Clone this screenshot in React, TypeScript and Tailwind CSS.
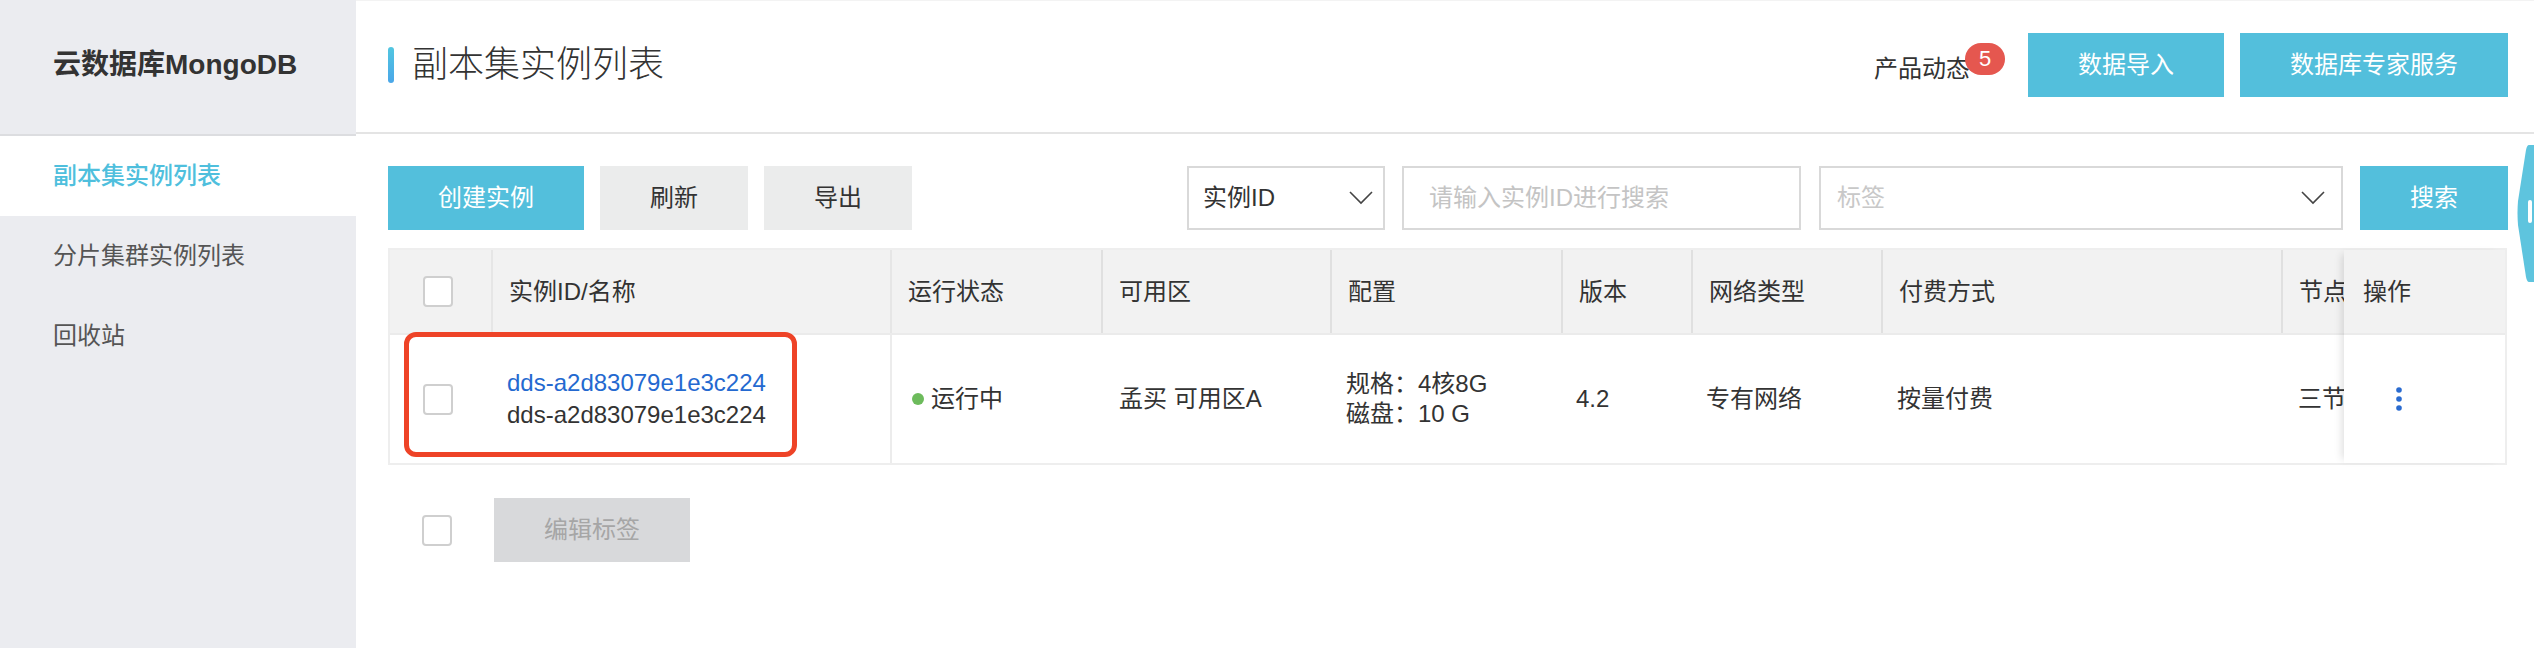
import React from "react";

function Checkbox() {
  return <div className="w-[30px] h-[31px] rounded-[4px] border-2 border-[#cfcfcf] bg-white shrink-0" />;
}

function Chevron() {
  return (
    <svg width="24" height="14" viewBox="0 0 24 14" className="shrink-0">
      <polyline points="1,1 12,12 23,1" fill="none" stroke="#444" strokeWidth="1.6" />
    </svg>
  );
}

export default function App() {
  const font = "font-['Liberation_Sans','Noto_Sans_CJK_SC',sans-serif]";
  return (
    <div className={`flex h-[648px] w-[2534px] overflow-hidden bg-white text-[#333] ${font}`}>
      {/* Sidebar */}
      <aside className="w-[356px] shrink-0 bg-[#ebecf0] flex flex-col">
        <div className="h-[136px] border-b-2 border-[#dcdde0] flex items-center pl-[53px] pb-[4px] text-[28px] font-bold text-[#333]">
          云数据库MongoDB
        </div>
        <div className="h-[80px] bg-white flex items-center pl-[53px] text-[24px] font-medium text-[#4fbfdd]">
          副本集实例列表
        </div>
        <div className="h-[80px] flex items-center pl-[53px] text-[24px] text-[#555]">分片集群实例列表</div>
        <div className="h-[80px] flex items-center pl-[53px] text-[24px] text-[#555]">回收站</div>
      </aside>

      {/* Main */}
      <main className="relative flex-1 flex flex-col min-w-0">
        {/* Header */}
        <header className="h-[134px] shrink-0 border-t border-[#f3f3f3] border-b-2 border-b-[#e4e4e4] flex items-center pl-[32px] pr-[26px] pb-[4px]">
          <div className="w-[6px] h-[36px] rounded-[3px] bg-gradient-to-b from-[#52c6e0] to-[#4aa6e8]" />
          <div className="ml-[18px] text-[36px] font-light text-[#333] leading-none">副本集实例列表</div>
          <div className="flex-1" />
          <div className="relative pt-[8px] text-[24px] text-[#333] mr-[58px]">
            产品动态
            <span className="absolute left-[91px] top-[0px] w-[40px] h-[32px] rounded-full bg-[#e5574f] text-white text-[22px] flex items-center justify-center">
              5
            </span>
          </div>
          <button className="w-[196px] h-[64px] bg-[#53bfdc] text-white text-[24px]">数据导入</button>
          <button className="ml-[16px] w-[268px] h-[64px] bg-[#53bfdc] text-white text-[24px]">数据库专家服务</button>
        </header>

        {/* Toolbar */}
        <div className="mt-[32px] h-[64px] flex items-stretch pl-[32px] pr-[26px]">
          <button className="w-[196px] bg-[#53bfdc] text-white text-[24px]">创建实例</button>
          <button className="ml-[16px] w-[148px] bg-[#ebecec] text-[#333] text-[24px]">刷新</button>
          <button className="ml-[16px] w-[148px] bg-[#ebecec] text-[#333] text-[24px]">导出</button>
          <div className="flex-1" />
          <div className="w-[198px] border-2 border-[#d9d9d9] flex items-center pl-[14px] pr-[10px] text-[24px] text-[#333]">
            <span className="flex-1">实例ID</span>
            <Chevron />
          </div>
          <div className="ml-[17px] w-[399px] border-2 border-[#d9d9d9] flex items-center pl-[25px] text-[24px] text-[#c4c4c4]">
            请输入实例ID进行搜索
          </div>
          <div className="ml-[18px] w-[524px] border-2 border-[#d9d9d9] flex items-center pl-[16px] pr-[16px] text-[24px] text-[#c8c8c8]">
            <span className="flex-1">标签</span>
            <Chevron />
          </div>
          <button className="ml-[17px] w-[148px] bg-[#53bfdc] text-white text-[24px]">搜索</button>
        </div>

        {/* Table */}
        <div className="relative mt-[18px] ml-[32px] w-[2119px] border-2 border-[#eeeeee] text-[24px] text-[#333]">
          {/* header row */}
          <div className="flex h-[85px] bg-[#f2f2f2] border-b-2 border-[#ebebeb]">
            <div className="w-[101px] shrink-0 flex items-center pl-[33px]">
              <Checkbox />
            </div>
            <div className="w-[399px] shrink-0 border-l-2 border-[#e6e6e6] flex items-center pl-[16px]">实例ID/名称</div>
            <div className="w-[211px] shrink-0 border-l-2 border-[#e6e6e6] flex items-center pl-[16px]">运行状态</div>
            <div className="w-[229px] shrink-0 border-l-2 border-[#e0e0e0] flex items-center pl-[16px]">可用区</div>
            <div className="w-[231px] shrink-0 border-l-2 border-[#e0e0e0] flex items-center pl-[16px]">配置</div>
            <div className="w-[130px] shrink-0 border-l-2 border-[#e0e0e0] flex items-center pl-[16px]">版本</div>
            <div className="w-[190px] shrink-0 border-l-2 border-[#e0e0e0] flex items-center pl-[16px]">网络类型</div>
            <div className="w-[400px] shrink-0 border-l-2 border-[#e0e0e0] flex items-center pl-[16px]">付费方式</div>
            <div className="flex-1 min-w-0 border-l-2 border-[#e0e0e0] flex items-center pl-[16px] whitespace-nowrap overflow-hidden">节点</div>
          </div>
          {/* body row */}
          <div className="flex h-[128px] bg-white">
            <div className="w-[101px] shrink-0 flex items-center pl-[33px]">
              <Checkbox />
            </div>
            <div className="w-[399px] shrink-0 flex flex-col justify-center pl-[16px] leading-[32px]">
              <span className="text-[#2469d0]">dds-a2d83079e1e3c224</span>
              <span className="text-[#333]">dds-a2d83079e1e3c224</span>
            </div>
            <div className="w-[211px] shrink-0 border-l-2 border-[#ececec] flex items-center pl-[20px]">
              <span className="w-[12px] h-[12px] rounded-full bg-[#6dbb5c] mr-[7px]" />
              运行中
            </div>
            <div className="w-[229px] shrink-0 flex items-center pl-[18px]">孟买 可用区A</div>
            <div className="w-[231px] shrink-0 flex flex-col justify-center pl-[16px] leading-[30px]">
              <span>规格：4核8G</span>
              <span>磁盘：10 G</span>
            </div>
            <div className="w-[130px] shrink-0 flex items-center pl-[15px]">4.2</div>
            <div className="w-[190px] shrink-0 flex items-center pl-[15px]">专有网络</div>
            <div className="w-[400px] shrink-0 flex items-center pl-[16px]">按量付费</div>
            <div className="flex-1 min-w-0 flex items-center pl-[17px] whitespace-nowrap overflow-hidden">三节点</div>
          </div>

          {/* fixed operation column */}
          <div className="absolute top-0 bottom-0 left-[1954px] w-[160px] flex flex-col shadow-[-6px_0_8px_-4px_rgba(0,0,0,0.13)]">
            <div className="h-[85px] bg-[#f2f2f2] border-b-2 border-[#ebebeb] flex items-center pl-[19px]">操作</div>
            <div className="flex-1 bg-white flex items-center pl-[51px]">
              <svg width="8" height="26" viewBox="0 0 8 26">
                <circle cx="4" cy="4" r="2.8" fill="#2a6bd0" />
                <circle cx="4" cy="13" r="2.8" fill="#2a6bd0" />
                <circle cx="4" cy="22" r="2.8" fill="#2a6bd0" />
              </svg>
            </div>
          </div>

          {/* red highlight annotation */}
          <div className="absolute left-[14px] top-[82px] w-[393px] h-[125px] border-[5px] border-[#ee4327] rounded-[12px] pointer-events-none" />
        </div>

        {/* bottom actions */}
        <div className="mt-[33px] flex items-center pl-[66px]">
          <Checkbox />
          <button className="ml-[42px] w-[196px] h-[64px] bg-[#d8d9db] text-[#a6a6a6] text-[24px]">编辑标签</button>
        </div>

        {/* right collapse handle */}
        <svg className="absolute right-0 top-[145px]" width="17" height="137" viewBox="0 0 17 137">
          <path d="M12 0 L17 0 L17 137 L12 137 Q10 137 9 132 L1 80 Q0 68 1 56 L9 5 Q10 0 12 0 Z" fill="#5ec4de" />
          <rect x="11" y="55" width="4" height="23" rx="2" fill="#ffffff" />
        </svg>
      </main>
    </div>
  );
}
